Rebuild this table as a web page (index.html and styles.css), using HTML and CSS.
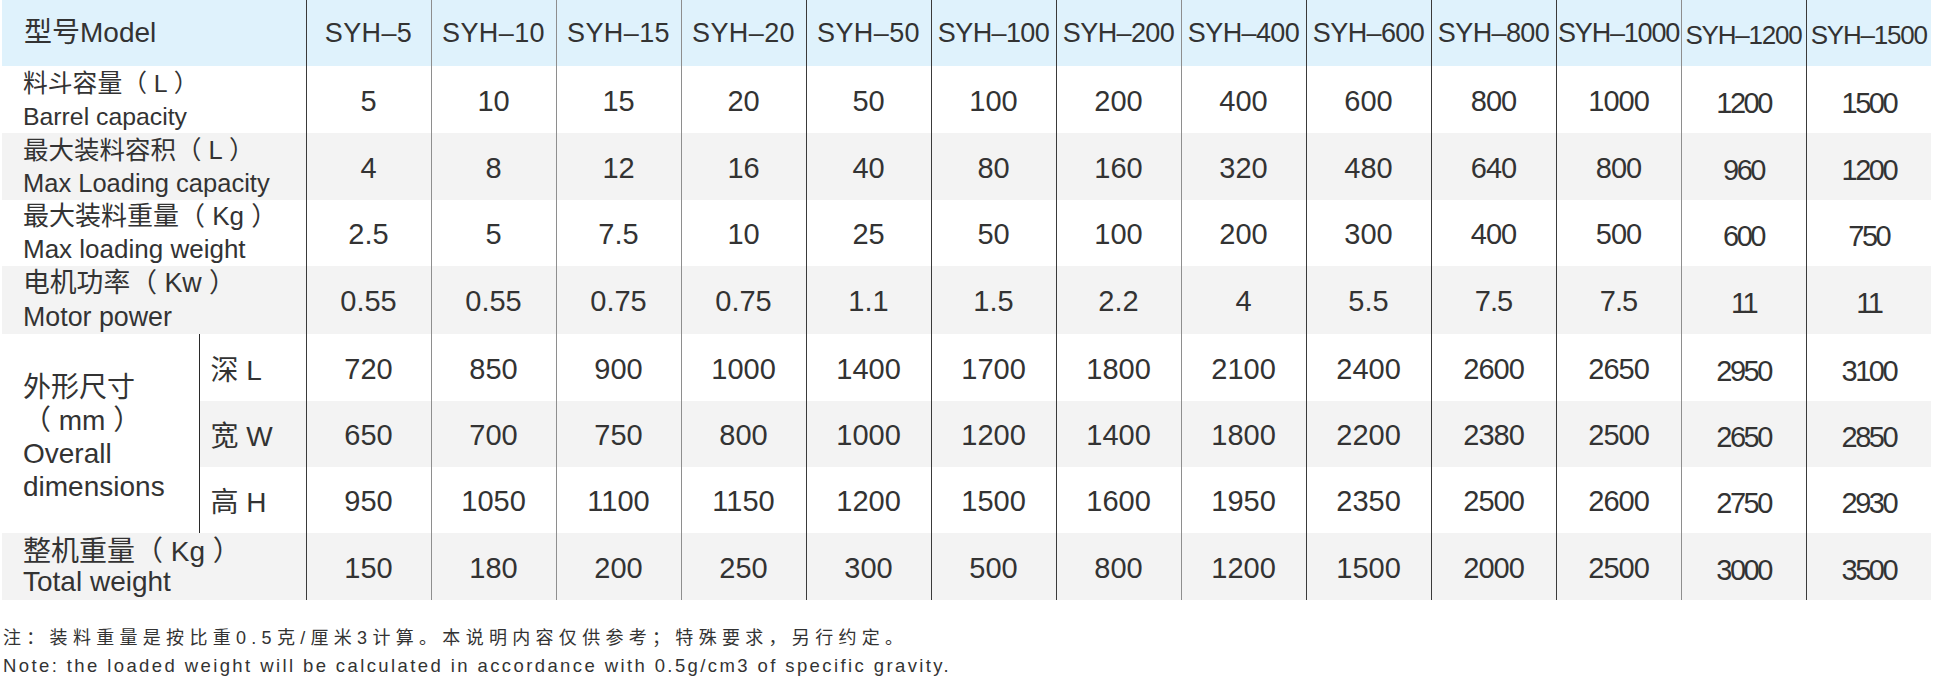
FILE: index.html
```html
<!DOCTYPE html>
<html lang="zh-CN">
<head>
<meta charset="utf-8">
<title>SYH 参数表</title>
<link rel="stylesheet" href="styles.css">
</head>
<body>
<table class="spec">
  <colgroup>
    <col class="c-lab">
    <col class="c-sub">
    <col class="c-val dk">
    <col class="c-val gr">
    <col class="c-val gr">
    <col class="c-val gr">
    <col class="c-val dk">
    <col class="c-val dk">
    <col class="c-val dk">
    <col class="c-val gr">
    <col class="c-val dk">
    <col class="c-val dk">
    <col class="c-val dk">
    <col class="c-val gr">
    <col class="c-val dk">
  </colgroup>
  <thead>
    <tr class="head">
      <th class="lab" colspan="2">型号Model</th>
      <th>SYH–5</th><th>SYH–10</th><th>SYH–15</th><th>SYH–20</th><th>SYH–50</th>
      <th class="tight">SYH–100</th><th class="tight">SYH–200</th><th class="tight">SYH–400</th>
      <th class="tight">SYH–600</th><th class="tight">SYH–800</th><th class="tighter">SYH–1000</th>
      <th class="tighter low">SYH–1200</th><th class="tighter low">SYH–1500</th>
    </tr>
  </thead>
  <tbody>
    <tr class="r67">
      <td class="lab s1" colspan="2">料斗容量（ L ）<br>Barrel capacity</td>
      <td>5</td><td>10</td><td>15</td><td>20</td><td>50</td><td>100</td><td>200</td><td>400</td><td>600</td><td class="c1">800</td><td class="c1">1000</td><td class="c2">1200</td><td class="c2">1500</td>
    </tr>
    <tr class="r67 alt">
      <td class="lab s2" colspan="2">最大装料容积（ L ）<br>Max Loading capacity</td>
      <td>4</td><td>8</td><td>12</td><td>16</td><td>40</td><td>80</td><td>160</td><td>320</td><td>480</td><td class="c1">640</td><td class="c1">800</td><td class="c2">960</td><td class="c2">1200</td>
    </tr>
    <tr class="r66">
      <td class="lab s3" colspan="2">最大装料重量（ Kg ）<br>Max loading weight</td>
      <td>2.5</td><td>5</td><td>7.5</td><td>10</td><td>25</td><td>50</td><td>100</td><td>200</td><td>300</td><td class="c1">400</td><td class="c1">500</td><td class="c2">600</td><td class="c2">750</td>
    </tr>
    <tr class="r67 alt">
      <td class="lab s4" colspan="2">电机功率（ Kw ）<br>Motor power</td>
      <td>0.55</td><td>0.55</td><td>0.75</td><td>0.75</td><td>1.1</td><td>1.5</td><td>2.2</td><td>4</td><td>5.5</td><td class="c1">7.5</td><td class="c1">7.5</td><td class="c2">11</td><td class="c2">11</td>
    </tr>
    <tr class="r67">
      <td class="lab dims" rowspan="3">外形尺寸<br>（ mm ）<br>Overall<br>dimensions</td>
      <td class="sub">深 L</td>
      <td>720</td><td>850</td><td>900</td><td>1000</td><td>1400</td><td>1700</td><td>1800</td><td>2100</td><td>2400</td><td class="c1">2600</td><td class="c1">2650</td><td class="c2">2950</td><td class="c2">3100</td>
    </tr>
    <tr class="r66 alt">
      <td class="sub">宽 W</td>
      <td>650</td><td>700</td><td>750</td><td>800</td><td>1000</td><td>1200</td><td>1400</td><td>1800</td><td>2200</td><td class="c1">2380</td><td class="c1">2500</td><td class="c2">2650</td><td class="c2">2850</td>
    </tr>
    <tr class="r66">
      <td class="sub">高 H</td>
      <td>950</td><td>1050</td><td>1100</td><td>1150</td><td>1200</td><td>1500</td><td>1600</td><td>1950</td><td>2350</td><td class="c1">2500</td><td class="c1">2600</td><td class="c2">2750</td><td class="c2">2930</td>
    </tr>
    <tr class="r67 alt">
      <td class="lab s6" colspan="2">整机重量（ Kg ）<br>Total weight</td>
      <td>150</td><td>180</td><td>200</td><td>250</td><td>300</td><td>500</td><td>800</td><td>1200</td><td>1500</td><td class="c1">2000</td><td class="c1">2500</td><td class="c2">3000</td><td class="c2">3500</td>
    </tr>
  </tbody>
</table>
<div class="note">
  <p class="zh">注：装料重量是按比重0.5克/厘米3计算。本说明内容仅供参考；特殊要求，另行约定。</p>
  <p class="en">Note: the loaded weight will be calculated in accordance with 0.5g/cm3 of specific gravity.</p>
</div>
</body>
</html>
```
FILE: styles.css
```css
html, body {
  margin: 0;
  padding: 0;
  background: #ffffff;
}

body {
  font-family: "Liberation Sans", "Noto Sans CJK SC", sans-serif;
  color: #333333;
  width: 1936px;
  height: 688px;
  overflow: hidden;
}

.spec {
  border-collapse: collapse;
  table-layout: fixed;
  width: 1929px;
  margin-left: 2px;
}

.c-lab { width: 197px; }
.c-sub { width: 107px; }
.c-val { width: 125px; }
.dk { border-left: 1px solid #3a3a3a; }
.gr { border-left: 1px solid #8e8e8e; }

.spec th,
.spec td {
  padding: 0;
  text-align: center;
  vertical-align: middle;
  font-weight: 400;
  white-space: nowrap;
}

.head {
  height: 66px;
  background: #dff2fc;
}

.head th {
  font-size: 27px;
  letter-spacing: 0.4px;
}

.head th.tight { letter-spacing: -0.6px; }
.head th.tighter { letter-spacing: -1.2px; }
.head th.low { padding-top: 4px; font-size: 26px; }

.r67 { height: 67px; }
.r66 { height: 66px; }
.alt { background: #f3f3f3; }

.spec td {
  font-size: 29px;
  padding-top: 3px;
}

.spec td.c1 { letter-spacing: -1px; }
.spec td.c2 { letter-spacing: -2.5px; padding-top: 7px; }

.spec .lab {
  text-align: left;
  padding-left: 21px;
  padding-top: 0;
  line-height: 32px;
}

.head .lab {
  font-size: 28px;
  letter-spacing: 0;
  padding-left: 22px;
}

.spec td.s1 { font-size: 24.8px; line-height: 33px; }
.spec td.s2 { font-size: 25.5px; line-height: 33px; }
.spec td.s3 { font-size: 26px; line-height: 33px; }
.spec td.s4 { font-size: 26.8px; line-height: 34px; }
.spec td.s6 { font-size: 28px; line-height: 30px; }

.spec td.dims {
  font-size: 28px;
  line-height: 33px;
  background: #ffffff;
  padding-top: 7px;
}

.spec td.sub {
  text-align: left;
  padding-left: 11px;
  padding-top: 0;
  font-size: 28px;
  border-left: 1px solid #2a2a2a;
}

.note {
  padding-top: 24px;
  padding-left: 3px;
}

.note p {
  margin: 0;
  line-height: 28px;
  white-space: nowrap;
}

.note .zh {
  font-size: 18px;
  letter-spacing: 5.3px;
}

.note .en {
  font-size: 18.5px;
  letter-spacing: 2.4px;
}
```
